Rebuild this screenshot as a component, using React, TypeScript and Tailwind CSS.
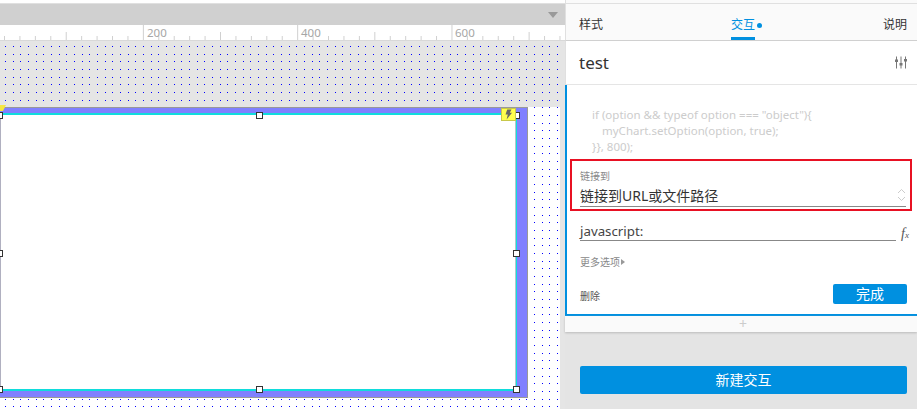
import React from 'react';

const FONT = '[font-family:"Noto_Sans","Noto_Sans_CJK_SC",sans-serif]';

// ruler ticks: one per 20 units at a scale of 0.77px/unit
const ticks = Array.from({ length: 37 }, (_, i) => 4.3 + i * 15.43);

function Ruler() {
  return (
    <svg width="565" height="16" className="block bg-white border-b border-[#d8d8d8]">
      {ticks.map((x, i) => {
        const off = i - 9; // index 9 lands on the 200 mark
        const major = off % 10 === 0;
        const medium = off % 5 === 0;
        const y1 = major ? 0 : medium ? 7 : 11;
        return <line key={i} x1={x + 0.2} x2={x + 0.2} y1={y1} y2={15} stroke="#d0d0d0" strokeWidth="1" />;
      })}
      <text x="147" y="11.5" fontSize="11.5" fill="#a6a6a6" fontFamily="Noto Sans">200</text>
      <text x="301" y="11.5" fontSize="11.5" fill="#a6a6a6" fontFamily="Noto Sans">400</text>
      <text x="455" y="11.5" fontSize="11.5" fill="#a6a6a6" fontFamily="Noto Sans">600</text>
    </svg>
  );
}

function Handle({ className }: { className: string }) {
  return <div className={`absolute w-[7px] h-[7px] bg-white border border-[#333] ${className}`} />;
}

function Canvas() {
  return (
    <div className="w-[565px] flex flex-col shrink-0">
      <div className="h-[4px] bg-white border-b border-[#e0e0e0]" />
      <div className="h-[21px] bg-[#d0d0d0] flex justify-end items-center pr-[7px]">
        <div className="w-0 h-0 border-x-[5px] border-x-transparent border-t-[6px] border-t-[#999]" />
      </div>
      <Ruler />
      {/* grid dots: blue columns masked by rows, 8/8/7 spacing like the 0.77 zoom */}
      <div className="relative h-[66px] bg-[#e5e5e5]">
        <div className="absolute inset-0 bg-[image:repeating-linear-gradient(90deg,transparent_0_5px,#00f_5px_6px,transparent_6px_13px,#00f_13px_14px,transparent_14px_20px,#00f_20px_21px,transparent_21px_23px)] [mask-image:repeating-linear-gradient(180deg,transparent_0_5px,#000_5px_6px,transparent_6px_13px,#000_13px_14px,transparent_14px_20px,#000_20px_21px,transparent_21px_23px)]" />
      </div>
      <div className="flex-1 flex">
        <div className="relative flex-1 bg-white">
          <div className="absolute inset-0 bg-[image:repeating-linear-gradient(90deg,transparent_0_5px,#00f_5px_6px,transparent_6px_13px,#00f_13px_14px,transparent_14px_20px,#00f_20px_21px,transparent_21px_23px)] [mask-image:repeating-linear-gradient(180deg,#000_0_1px,transparent_1px_8px,#000_8px_9px,transparent_9px_16px,#000_16px_17px,transparent_17px_23px)]" />
          <div className="relative w-[528px] h-[291px] bg-[#8080ff] border-t border-b border-r border-[#999] pt-[5px] pr-[10px] pb-[6px]">
            <div className="h-full border-t-2 border-b-2 border-r border-[#10dcdc]">
              <div className="h-full bg-white border-r border-r-[#b0c4cc] border-l border-l-[#b0b0c0]" />
            </div>
            <div className="absolute left-0 -top-[3px] w-[6px] h-[6px] bg-[#f5e642] [clip-path:polygon(0_0,100%_0,50%_100%,0_100%)]" />
            <Handle className="-left-[4px] top-[4px]" />
            <Handle className="left-[256px] top-[4px]" />
            <Handle className="left-[513px] top-[4px]" />
            <Handle className="-left-[4px] top-[142px]" />
            <Handle className="left-[513px] top-[142px]" />
            <Handle className="-left-[4px] top-[278px]" />
            <Handle className="left-[256px] top-[278px]" />
            <Handle className="left-[513px] top-[278px]" />
            <div className="absolute left-[501px] top-0 w-[15px] h-[13px] bg-[#ffff4d] border border-[#c8c84a] flex items-center justify-center">
              <svg width="9" height="11" viewBox="0 0 9 11">
                <path d="M3.2 0.5 H7.5 L5.8 3.8 H8 L2.6 10.5 L3.8 5.6 H1.5 Z" fill="#666" />
              </svg>
            </div>
          </div>
        </div>
        <div className="w-[5px] bg-[#e5e5e5]" />
      </div>
    </div>
  );
}

function Panel() {
  return (
    <div className="flex-1 flex flex-col bg-[#e4e4e4]">
      <div className="h-[41px] pt-[4px] bg-[#fafafa] border-b border-l border-b-[#d0d0d0] border-l-[#e0e0e0] pl-[13px] pr-[10px] flex relative">
        <div className="absolute inset-x-0 top-[3px] h-px bg-[#e0e0e0]" />
        <div className="w-[152px] pt-[12px] text-xs leading-[18px] text-[#333]">样式</div>
        <div className="flex gap-[2px]">
          <div className="w-[24px] h-[36px] pt-[12px] text-xs leading-[18px] text-[#0090e0] border-b-[3px] border-[#0090e0]">交互</div>
          <div className="mt-[19px] w-[5px] h-[5px] rounded-full bg-[#0090e0]" />
        </div>
        <div className="ml-auto pt-[12px] text-xs leading-[18px] text-[#333]">说明</div>
      </div>
      <div className="h-[44px] bg-white border-b border-l border-b-[#e5e5e5] border-l-[#e0e0e0] pl-[13px] pr-[10px] flex items-center justify-between">
        <span className="text-[17px] text-[#333]">test</span>
        <svg width="12" height="13" viewBox="0 0 12 13" stroke="#777" fill="#777">
          <path d="M1.5 0.5V12.5M6 0.5V12.5M10.5 0.5V12.5" strokeWidth="1" fill="none" />
          <rect x="0" y="3.5" width="3" height="2.5" stroke="none" />
          <rect x="4.5" y="7" width="3" height="2.5" stroke="none" />
          <rect x="9" y="3" width="3" height="2.5" stroke="none" />
        </svg>
      </div>
      <div className="h-[231px] bg-white border-l-2 border-b-2 border-[#0090e0] flex flex-col">
        <div className="h-[74px] pt-[22px] pl-[25px] text-[11.5px] leading-4 text-[#ccc]">
          <div>if (option &amp;&amp; typeof option === "object"){'{'}</div>
          <div className="pl-[10px]">myChart.setOption(option, true);</div>
          <div>{'}'}{'}'}, 800);</div>
        </div>
        <div className="ml-[3px] mr-[5px] h-[52px] border-2 border-[#e81123] pl-[8px] pr-[4px] pt-[8px]">
          <div className="text-[10px] leading-[14px] text-[#888]">链接到</div>
          <div className="h-[24px] border-b border-[#888] flex items-end justify-between">
            <span className="text-sm text-[#333] leading-[21px]">链接到URL或文件路径</span>
            <svg width="9" height="14" viewBox="0 0 9 14" fill="none" stroke="#ccc" strokeWidth="1" className="mb-[4px]">
              <path d="M1 5 L4.5 1.5 L8 5M1 9 L4.5 12.5 L8 9" />
            </svg>
          </div>
        </div>
        <div className="mt-[12px] pl-[13px] pr-[8px] flex items-end">
          <div className="flex-1 h-[18px] border-b border-[#888] text-[13.3px] leading-[17px] text-[#444]">javascript:</div>
          <span className="w-[13px] text-right text-[14px] leading-[11px] italic [font-family:'Liberation_Serif',serif] text-[#555]">
            f<span className="text-[9px]">x</span>
          </span>
        </div>
        <div className="mt-[14px] pl-[13px] flex items-center gap-[1px] text-[10px] leading-[14px] text-[#888]">
          更多选项
          <div className="w-0 h-0 border-y-[3px] border-y-transparent border-l-[4px] border-l-[#999]" />
        </div>
        <div className="mt-[15px] pl-[13px] pr-[10px] flex items-center justify-between">
          <span className="text-[10px] leading-[14px] text-[#555] pt-[4px]">删除</span>
          <button className="w-[74px] h-[20px] rounded-[2px] bg-[#0090e0] text-white text-sm leading-[20px]">完成</button>
        </div>
      </div>
      <div className="h-[16px] bg-[#fafafa] shadow-[0_1px_2px_#bbb] flex items-center justify-center pl-[4px] text-[#ccc] text-sm leading-none">+</div>
      <div className="pt-[34px] pl-[15px] pr-[10px]">
        <button className="w-full h-[28px] rounded-[2px] bg-[#0090e0] text-white text-sm">新建交互</button>
      </div>
    </div>
  );
}

export default function App() {
  return (
    <div className={`w-[917px] h-[409px] overflow-hidden flex ${FONT}`}>
      <Canvas />
      <Panel />
    </div>
  );
}
